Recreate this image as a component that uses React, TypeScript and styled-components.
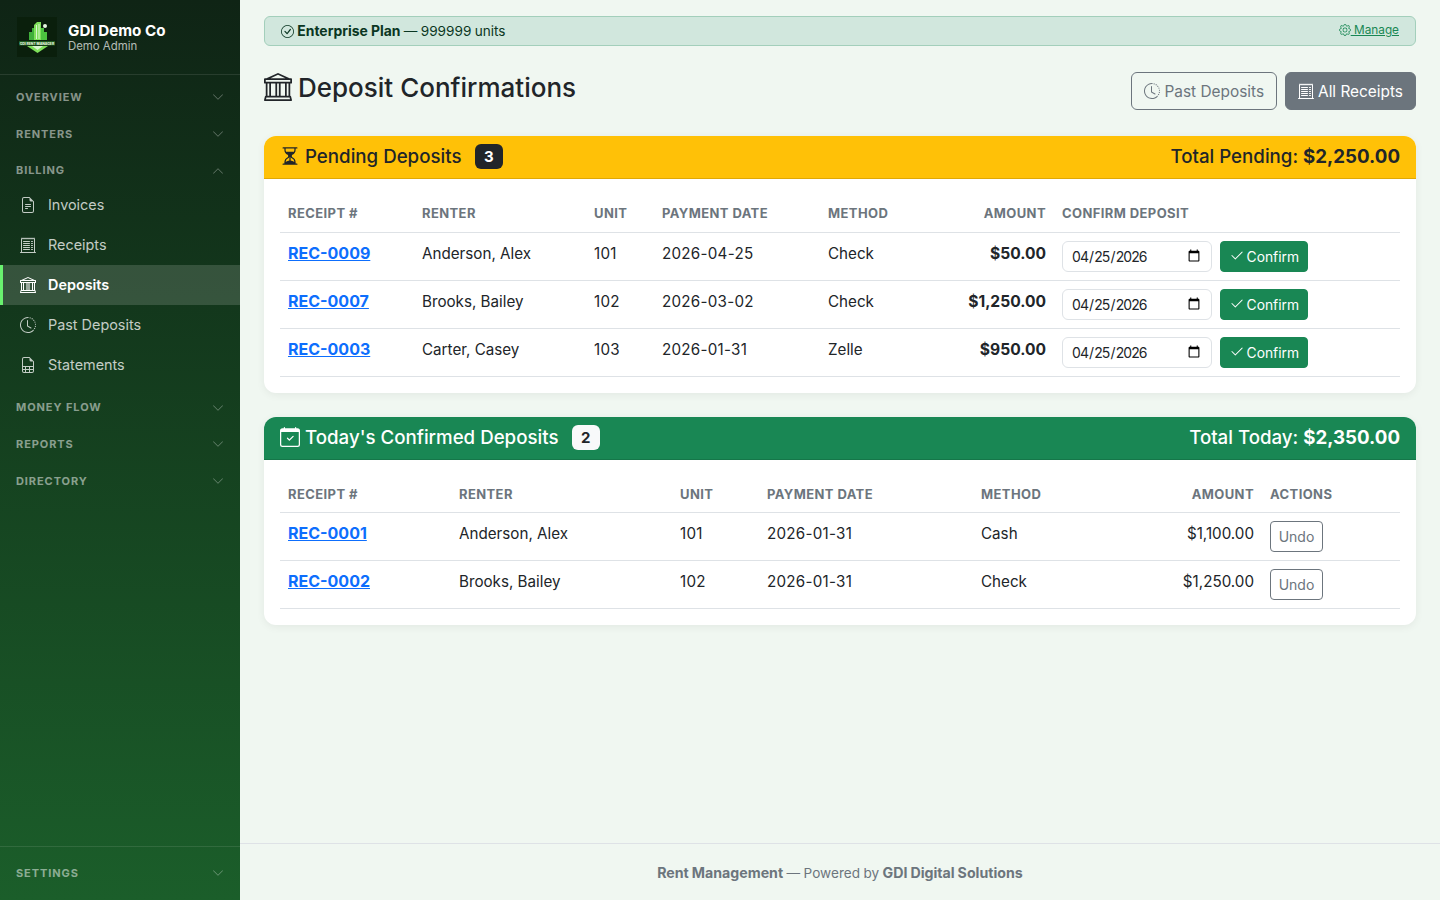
import styled, { createGlobalStyle } from 'styled-components';
import {
  BsBank,
  BsCalendarCheck,
  BsCheck2,
  BsCheckCircle,
  BsChevronDown,
  BsChevronUp,
  BsClockHistory,
  BsFileEarmarkSpreadsheet,
  BsFileEarmarkText,
  BsGear,
  BsHourglassSplit,
  BsReceiptCutoff,
} from 'react-icons/bs';

const pending = [
  { id: 'REC-0009', renter: 'Anderson, Alex', unit: '101', date: '2026-04-25', method: 'Check', amount: '$50.00' },
  { id: 'REC-0007', renter: 'Brooks, Bailey', unit: '102', date: '2026-03-02', method: 'Check', amount: '$1,250.00' },
  { id: 'REC-0003', renter: 'Carter, Casey', unit: '103', date: '2026-01-31', method: 'Zelle', amount: '$950.00' },
];

const confirmed = [
  { id: 'REC-0001', renter: 'Anderson, Alex', unit: '101', date: '2026-01-31', method: 'Cash', amount: '$1,100.00' },
  { id: 'REC-0002', renter: 'Brooks, Bailey', unit: '102', date: '2026-01-31', method: 'Check', amount: '$1,250.00' },
];

const pendingCols = [134, 172, 68, 166, 120, 114, 346];
const confirmedCols = [171, 221, 87, 214, 120, 169, 138];

function Logo() {
  return (
    <svg width="40" height="40" viewBox="0 0 40 40">
      <rect width="40" height="40" fill="#0a1f0c" />
      <path d="M12 23 V15 H15 V11 H17 V23 Z" fill="#3fae3a" />
      <path d="M17 23 V8 L20 5 H24 V23 Z" fill="#7ee05a" />
      <path d="M24 23 V11 H27 V15 H30 V23 Z" fill="#4cc23f" />
      <path d="M19.5 8 V22 M22 7 V22" stroke="#d8f5cf" strokeWidth="1" />
      <circle cx="28" cy="9" r="2" fill="#e8f7e2" />
      <rect x="2" y="24" width="36" height="4.5" fill="#1c5a1e" />
      <text x="20" y="27.6" textAnchor="middle" fontSize="3.4" fontWeight="800" fontFamily="Inter, sans-serif" fill="#e6f5df">GDI RENT MANAGER</text>
      <path d="M10 29 H31 L20.5 36 Z" fill="#7ee05a" />
      <path d="M15 29 H26 L20.5 33 Z" fill="#d8f5cf" />
    </svg>
  );
}

function Section({ label, open }: { label: string; open?: boolean }) {
  return (
    <SectionHead>
      <span>{label}</span>
      {open ? <BsChevronUp /> : <BsChevronDown />}
    </SectionHead>
  );
}

export default function App() {
  return (
    <Shell>
      <GlobalStyle />
      <Sidebar>
        <Brand>
          <Logo />
          <div>
            <BrandName>GDI Demo Co</BrandName>
            <BrandUser>Demo Admin</BrandUser>
          </div>
        </Brand>
        <Nav>
          <Section label="OVERVIEW" />
          <Section label="RENTERS" />
          <Section label="BILLING" open />
          <NavList>
            <NavItem><BsFileEarmarkText />Invoices</NavItem>
            <NavItem><BsReceiptCutoff />Receipts</NavItem>
            <NavItem $active><BsBank />Deposits</NavItem>
            <NavItem><BsClockHistory />Past Deposits</NavItem>
            <NavItem><BsFileEarmarkSpreadsheet />Statements</NavItem>
          </NavList>
          <Section label="MONEY FLOW" />
          <Section label="REPORTS" />
          <Section label="DIRECTORY" />
        </Nav>
        <SidebarFoot>
          <Section label="SETTINGS" />
        </SidebarFoot>
      </Sidebar>
      <Main>
        <Content>
          <PlanBanner>
            <span><BsCheckCircle /> <strong>Enterprise Plan</strong> — 999999 units</span>
            <ManageLink href="#"><BsGear /> Manage</ManageLink>
          </PlanBanner>
          <TitleRow>
            <Title><BsBank />Deposit Confirmations</Title>
            <TitleActions>
              <OutlineBtn><BsClockHistory />Past Deposits</OutlineBtn>
              <SolidBtn><BsReceiptCutoff />All Receipts</SolidBtn>
            </TitleActions>
          </TitleRow>

          <Card>
            <CardHead $tone="warning">
              <CardTitle><BsHourglassSplit /> Pending Deposits <Count $tone="warning">3</Count></CardTitle>
              <CardTotal>Total Pending: <strong>$2,250.00</strong></CardTotal>
            </CardHead>
            <CardBody>
              <Table>
                <colgroup>{pendingCols.map((w, i) => <col key={i} width={w} />)}</colgroup>
                <thead>
                  <tr>
                    <Th>Receipt #</Th>
                    <Th>Renter</Th>
                    <Th>Unit</Th>
                    <Th>Payment Date</Th>
                    <Th>Method</Th>
                    <Th $right>Amount</Th>
                    <Th>Confirm Deposit</Th>
                  </tr>
                </thead>
                <tbody>
                  {pending.map((row) => (
                    <tr key={row.id}>
                      <LinkTd><RecLink href="#">{row.id}</RecLink></LinkTd>
                      <Td>{row.renter}</Td>
                      <NumTd>{row.unit}</NumTd>
                      <NumTd>{row.date}</NumTd>
                      <Td>{row.method}</Td>
                      <AmountTd>{row.amount}</AmountTd>
                      <Td>
                        <ConfirmForm>
                          <DateInput type="date" defaultValue="2026-04-25" />
                          <ConfirmBtn><BsCheck2 />Confirm</ConfirmBtn>
                        </ConfirmForm>
                      </Td>
                    </tr>
                  ))}
                </tbody>
              </Table>
            </CardBody>
          </Card>

          <Card>
            <CardHead $tone="success">
              <CardTitle><BsCalendarCheck /> Today's Confirmed Deposits <Count $tone="success">2</Count></CardTitle>
              <CardTotal>Total Today: <strong>$2,350.00</strong></CardTotal>
            </CardHead>
            <CardBody>
              <Table>
                <colgroup>{confirmedCols.map((w, i) => <col key={i} width={w} />)}</colgroup>
                <thead>
                  <tr>
                    <LowTh>Receipt #</LowTh>
                    <LowTh>Renter</LowTh>
                    <LowTh>Unit</LowTh>
                    <LowTh>Payment Date</LowTh>
                    <LowTh>Method</LowTh>
                    <LowTh $right>Amount</LowTh>
                    <LowTh>Actions</LowTh>
                  </tr>
                </thead>
                <tbody>
                  {confirmed.map((row) => (
                    <tr key={row.id}>
                      <LinkTd><RecLink href="#">{row.id}</RecLink></LinkTd>
                      <Td>{row.renter}</Td>
                      <NumTd>{row.unit}</NumTd>
                      <NumTd>{row.date}</NumTd>
                      <Td>{row.method}</Td>
                      <Td $right>{row.amount}</Td>
                      <Td><UndoBtn>Undo</UndoBtn></Td>
                    </tr>
                  ))}
                </tbody>
              </Table>
            </CardBody>
          </Card>
        </Content>
        <Footer>
          <span><strong>Rent Management</strong> — Powered by <strong>GDI Digital Solutions</strong></span>
        </Footer>
      </Main>
    </Shell>
  );
}

const GlobalStyle = createGlobalStyle`
  * { box-sizing: border-box; }
  html, body { margin: 0; padding: 0; }
  body {
    font-family: Inter, "Liberation Sans", sans-serif;
    font-size: 16px;
    line-height: 1.5;
    color: #212529;
    background: #f0f7f1;
  }
`;

const Shell = styled.div`
  display: flex;
  min-height: 100vh;
`;

const Sidebar = styled.aside`
  width: 240px;
  flex-shrink: 0;
  height: 100vh;
  display: flex;
  flex-direction: column;
  color: #fff;
  background: linear-gradient(180deg, #0f2415 0%, #1b5e2a 100%);
`;

const Brand = styled.div`
  height: 75px;
  display: flex;
  align-items: center;
  gap: 11px;
  padding: 0 16px 0 17px;
  border-bottom: 1px solid rgba(255, 255, 255, 0.1);
`;

const BrandName = styled.div`
  font-size: 15.2px;
  font-weight: 700;
  line-height: 17px;
  color: #fff;
`;

const BrandUser = styled.div`
  font-size: 11.4px;
  line-height: 14px;
  color: rgba(255, 255, 255, 0.7);
`;

const Nav = styled.nav`
  flex: 1;
  padding-top: 7.4px;
`;

const SectionHead = styled.div`
  height: 30px;
  margin-bottom: 6.67px;
  padding: 0 16px;
  display: flex;
  align-items: center;
  justify-content: space-between;
  font-size: 11px;
  font-weight: 700;
  letter-spacing: 0.92px;
  color: rgba(255, 255, 255, 0.5);
  svg {
    width: 12px;
    height: 12px;
    color: rgba(255, 255, 255, 0.35);
  }
`;

const NavList = styled.div`
  margin-top: -7.67px;
  margin-bottom: 7.94px;
`;

const NavItem = styled.div<{ $active?: boolean }>`
  height: 40px;
  display: flex;
  align-items: center;
  gap: 12px;
  padding-left: ${(p) => (p.$active ? '17px' : '20px')};
  font-size: 14.4px;
  font-weight: ${(p) => (p.$active ? 600 : 400)};
  color: ${(p) => (p.$active ? '#fff' : 'rgba(255, 255, 255, 0.75)')};
  background: ${(p) => (p.$active ? 'rgba(255, 255, 255, 0.15)' : 'transparent')};
  border-left: ${(p) => (p.$active ? '3px solid #69f06f' : 'none')};
  svg {
    width: 16px;
    height: 16px;
  }
`;

const SidebarFoot = styled.div`
  height: 54px;
  padding-top: 11px;
  border-top: 1px solid rgba(255, 255, 255, 0.1);
`;

const Main = styled.main`
  flex: 1;
  min-width: 0;
  display: flex;
  flex-direction: column;
`;

const Content = styled.div`
  flex: 1;
  padding: 16px 24px;
`;

const PlanBanner = styled.div`
  height: 30px;
  display: flex;
  align-items: center;
  justify-content: space-between;
  padding: 0 16px;
  font-size: 13.6px;
  word-spacing: -0.5px;
  color: #0a3622;
  background: #d1e7dd;
  border: 1px solid #a3cfbb;
  border-radius: 6px;
  strong {
    font-size: 13.9px;
    word-spacing: 0;
  }
  svg {
    width: 13px;
    height: 13px;
    vertical-align: -2px;
  }
`;

const ManageLink = styled.a`
  font-size: 11.8px;
  word-spacing: 0;
  color: #198754;
  svg {
    width: 12px;
    height: 12px;
  }
`;

const TitleRow = styled.div`
  display: flex;
  align-items: flex-start;
  justify-content: space-between;
  margin-top: 26px;
  margin-bottom: 26px;
`;

const Title = styled.h1`
  margin: 0;
  padding-top: 1px;
  display: flex;
  align-items: center;
  gap: 6px;
  font-size: 26px;
  font-weight: 500;
  line-height: 30px;
  svg {
    width: 28px;
    height: 28px;
    transform: translateY(-1px);
  }
`;

const TitleActions = styled.div`
  display: flex;
  gap: 8px;
`;

const OutlineBtn = styled.button`
  height: 38px;
  padding: 0 12px;
  display: inline-flex;
  align-items: center;
  gap: 4px;
  font-family: inherit;
  font-size: 15.4px;
  color: #6c757d;
  background: transparent;
  border: 1px solid #6c757d;
  border-radius: 6px;
  svg {
    width: 16px;
    height: 16px;
  }
`;

const SolidBtn = styled(OutlineBtn)`
  color: #fff;
  background: #6c757d;
`;

const Card = styled.section`
  margin-bottom: 24px;
  background: #fff;
  border-radius: 12px;
  overflow: hidden;
  box-shadow: 0 2px 8px rgba(0, 0, 0, 0.06);
`;

const CardHead = styled.div<{ $tone: 'warning' | 'success' }>`
  height: 43px;
  display: flex;
  align-items: center;
  justify-content: space-between;
  padding: ${(p) => (p.$tone === 'warning' ? '0 16px' : '1px 16px 0')};
  font-size: 18.7px;
  color: ${(p) => (p.$tone === 'warning' ? '#212529' : '#fff')};
  background: ${(p) => (p.$tone === 'warning' ? '#ffc107' : '#198754')};
  border-bottom: 1px solid rgba(0, 0, 0, 0.125);
`;

const CardTitle = styled.div`
  font-weight: 500;
  display: flex;
  align-items: center;
  gap: 5px;
  svg {
    width: 20px;
    height: 20px;
    transform: translateY(-1px);
  }
`;

const CardTotal = styled.div`
  font-weight: 500;
  strong {
    font-weight: 700;
  }
`;

const Count = styled.span<{ $tone: 'warning' | 'success' }>`
  margin-left: 8px;
  padding: 5px 9.5px;
  font-size: 15px;
  font-weight: 700;
  line-height: 15px;
  border-radius: 6px;
  color: ${(p) => (p.$tone === 'warning' ? '#fff' : '#212529')};
  background: ${(p) => (p.$tone === 'warning' ? '#212529' : '#f8f9fa')};
`;

const CardBody = styled.div`
  padding: 16px;
`;

const Table = styled.table`
  width: 100%;
  table-layout: fixed;
  border-collapse: collapse;
`;

const Th = styled.th<{ $right?: boolean }>`
  height: 37px;
  padding: 8px;
  font-size: 13px;
  font-weight: 650;
  letter-spacing: 0.4px;
  text-transform: uppercase;
  white-space: nowrap;
  color: #6c757d;
  text-align: ${(p) => (p.$right ? 'right' : 'left')};
  border-bottom: 1px solid #dee2e6;
`;

const LowTh = styled(Th)`
  padding: 9px 8px 7px;
`;

const Td = styled.td<{ $right?: boolean }>`
  height: 48px;
  padding: 8px;
  vertical-align: top;
  white-space: nowrap;
  font-size: 15.2px;
  line-height: 26px;
  text-align: ${(p) => (p.$right ? 'right' : 'left')};
  border-bottom: 1px solid #dee2e6;
`;

const LinkTd = styled(Td)`
  line-height: 24px;
`;

const NumTd = styled(Td)`
  letter-spacing: 0.25px;
`;

const AmountTd = styled(Td)`
  font-size: 15.6px;
  font-weight: 700;
  line-height: 25px;
  text-align: right;
`;

const RecLink = styled.a`
  font-size: 16px;
  font-weight: 700;
  color: #0d6efd;
  text-decoration: underline;
`;

const ConfirmForm = styled.div`
  display: flex;
  gap: 8px;
`;

const DateInput = styled.input`
  width: 150px;
  height: 31px;
  padding: 4px 8px;
  font-family: inherit;
  font-size: 14px;
  letter-spacing: -0.9px;
  color: #212529;
  background: #fff;
  border: 1px solid #dee2e6;
  border-radius: 6px;
`;

const ConfirmBtn = styled.button`
  width: 88px;
  height: 31px;
  padding: 1px 8px 0;
  display: inline-flex;
  align-items: center;
  gap: 2px;
  font-family: inherit;
  font-size: 13.8px;
  color: #fff;
  background: #198754;
  border: 1px solid #198754;
  border-radius: 4px;
  svg {
    width: 16px;
    height: 16px;
    transform: translateY(-1px);
  }
`;

const UndoBtn = styled.button`
  display: block;
  width: 53px;
  height: 31px;
  padding: 0;
  font-family: inherit;
  font-size: 14px;
  color: #6c757d;
  background: transparent;
  border: 1px solid #6c757d;
  border-radius: 4px;
`;

const Footer = styled.footer`
  height: 57px;
  padding-top: 1px;
  display: flex;
  align-items: center;
  justify-content: center;
  font-size: 13.6px;
  word-spacing: -0.4px;
  color: #6c757d;
  border-top: 1px solid #dee2e6;
  strong {
    font-size: 14.2px;
    font-weight: 700;
  }
`;
